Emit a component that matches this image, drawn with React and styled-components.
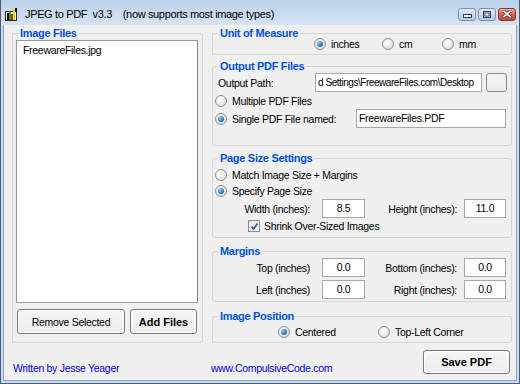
import React from 'react';
import styled, { createGlobalStyle } from 'styled-components';

const GlobalStyle = createGlobalStyle`
    html, body {
        margin: 0;
        padding: 0;
        background: #ffffff;
    }
    body {
        font-family: "Liberation Sans", Arial, sans-serif;
        font-size: 11px;
        color: #000;
    }
`;

const Window = styled.div`
    width: 520px;
    height: 384px;
    box-sizing: border-box;
    border: 1px solid #4a5d78;
    border-top: none;
    background: #c8daf0;
    display: flex;
    flex-direction: column;
    overflow: hidden;
`;

const TitleBar = styled.div`
    height: 25px;
    flex: none;
    display: flex;
    align-items: center;
    padding: 3px 3px 0 4px;
    box-sizing: border-box;
    background: linear-gradient(#bcd1ea, #d6e3f3);
`;

const TitleText = styled.span`
    flex: 1;
    margin-left: 7px;
    white-space: pre;
    font-size: 11px;
    letter-spacing: -0.35px;
    color: #000;
`;

const CaptionButtons = styled.div`
    display: flex;
    gap: 2px;
`;

const CaptionButton = styled.div`
    width: 18px;
    height: 13px;
    box-sizing: border-box;
    border: 1px solid ${p => (p.$close ? '#8d3c30' : '#7a90ae')};
    border-radius: 3px;
    background: ${p =>
        p.$close
            ? 'linear-gradient(#e9a89a, #cf5f4c 55%, #c04a36)'
            : 'linear-gradient(#e4ecf7, #c6d6ea 55%, #b9cce4)'};
    display: flex;
    align-items: center;
    justify-content: center;
`;

const Frame = styled.div`
    flex: 1;
    padding: 0 2px 2px;
    display: flex;
`;

const Client = styled.div`
    flex: 1;
    background: #f0f0f0;
    border: 1px solid #8aa2c0;
    border-top: none;
    display: flex;
    flex-direction: column;
`;

const Main = styled.div`
    display: grid;
    grid-template-columns: 191px 300px;
    column-gap: 9px;
    padding: 8px 0 0 8px;
`;

const Group = styled.div`
    position: relative;
    box-sizing: border-box;
    height: ${p => p.$h}px;
    margin-top: ${p => p.$mt || 0}px;
    border: 1px solid #d5d5d5;
    border-radius: 3px;
    padding: ${p => p.$pad || '0'};
    display: flex;
    flex-direction: column;
`;

const Legend = styled.span`
    position: absolute;
    top: -7px;
    left: 5px;
    padding: 0 2px;
    background: #f0f0f0;
    color: #0050dd;
    font-weight: bold;
    font-size: 11px;
    line-height: 13px;
    letter-spacing: -0.3px;
`;

const RightColumn = styled.div`
    display: flex;
    flex-direction: column;
`;

const ListBox = styled.div`
    height: 263px;
    width: 182px;
    box-sizing: border-box;
    background: #fff;
    border: 1px solid #9a9a9a;
    border-right-color: #828282;
    padding: 3px 6px;
    font-size: 10.5px;
    letter-spacing: -0.3px;
`;

const ButtonRow = styled.div`
    display: flex;
    gap: 5px;
    margin: 6px 0 0 1px;
`;

const Button = styled.button`
    width: ${p => p.$w}px;
    height: ${p => p.$h || 25}px;
    box-sizing: border-box;
    border: 1px solid #7a7a7a;
    border-radius: 3px;
    background: linear-gradient(#f6f6f6, #ececec);
    box-shadow: inset 0 0 0 1px #fbfbfb;
    font-family: "Liberation Sans", Arial, sans-serif;
    font-size: ${p => (p.$bold ? 11 : 10.5)}px;
    font-weight: ${p => (p.$bold ? 'bold' : 'normal')};
    letter-spacing: ${p => (p.$bold ? '0' : '-0.3px')};
    color: #000;
    padding: 0;
`;

const Row = styled.div`
    display: ${p => (p.$grid ? 'grid' : 'flex')};
    grid-template-columns: ${p => p.$cols || 'none'};
    align-items: center;
    height: ${p => p.$h}px;
    margin-top: ${p => p.$mt || 0}px;
    padding-left: ${p => p.$pl || 0}px;
    flex: none;
`;

const Label = styled.span`
    font-size: 10.5px;
    letter-spacing: -0.3px;
    white-space: nowrap;
    text-align: ${p => (p.$right ? 'right' : 'left')};
    padding-right: ${p => p.$pr || 0}px;
    padding-left: ${p => p.$pl || 0}px;
`;

const TextBox = styled.div`
    box-sizing: border-box;
    height: 19px;
    background: #fff;
    border: 1px solid #a8a8a8;
    font-size: ${p => (p.$small ? 10 : 10.5)}px;
    letter-spacing: ${p => (p.$small ? '-0.45px' : '-0.3px')};
    line-height: 17px;
    padding: 0 2px;
    white-space: nowrap;
    overflow: hidden;
    text-align: ${p => (p.$center ? 'center' : 'left')};
`;

const BrowseButton = styled.div`
    box-sizing: border-box;
    width: 21px;
    height: 19px;
    margin-left: 4px;
    border: 1px solid #8a8a8a;
    border-radius: 3px;
    background: linear-gradient(#f6f6f6, #ececec);
`;

const Option = styled.label`
    display: flex;
    align-items: center;
    width: ${p => (p.$w ? `${p.$w}px` : 'auto')};
    flex: none;
`;

const RadioDot = styled.span`
    position: relative;
    width: 12px;
    height: 12px;
    box-sizing: border-box;
    flex: none;
    border-radius: 50%;
    border: 1px solid #8e8f8f;
    background: radial-gradient(circle at 40% 40%, #ffffff, #dedede 80%);
    margin-right: 5px;
    &::after {
        content: '';
        display: ${p => (p.$on ? 'block' : 'none')};
        position: absolute;
        left: 2px;
        top: 2px;
        width: 6px;
        height: 6px;
        border-radius: 50%;
        background: radial-gradient(circle at 35% 35%, #8fd3f7, #1f62ad 70%, #174b86);
    }
`;

const CheckBox = styled.span`
    width: 12px;
    height: 12px;
    box-sizing: border-box;
    border: 1px solid #8e8f8f;
    background: linear-gradient(135deg, #e0e0e0, #ffffff);
    margin-right: 4px;
    display: flex;
    align-items: center;
    justify-content: center;
`;

const Footer = styled.div`
    display: flex;
    align-items: flex-start;
    padding: 7px 6px 0 9px;
`;

const FooterLink = styled.span`
    color: #0000e8;
    font-size: 10.5px;
    letter-spacing: -0.3px;
    line-height: 13px;
    margin-top: 12px;
    width: ${p => p.$w}px;
    flex: none;
`;

const Spacer = styled.div`
    flex: 1;
`;

const AppIcon = () => (
    <svg width="13" height="13" viewBox="0 0 13 13">
        <rect x="0.5" y="3.5" width="11" height="9" fill="#fff" stroke="#222" />
        <rect x="2" y="5" width="2" height="7" fill="#111" />
        <rect x="4" y="3" width="2" height="9" fill="#1fa02a" />
        <rect x="6" y="6" width="2" height="6" fill="#e11d1d" />
        <rect x="8" y="1" width="2" height="11" fill="#e7d400" />
        <rect x="10" y="0" width="2" height="4" fill="#111" />
    </svg>
);

const Radio = ({ on, label, w }) => (
    <Option $w={w}>
        <RadioDot $on={on} />
        <Label>{label}</Label>
    </Option>
);

const App = () => {
    return (
        <>
            <GlobalStyle />
            <Window>
                <TitleBar>
                    <AppIcon />
                    <TitleText>{'JPEG to PDF  v3.3    (now supports most image types)'}</TitleText>
                    <CaptionButtons>
                        <CaptionButton>
                            <svg width="9" height="8" viewBox="0 0 9 8">
                                <rect x="0.5" y="4.5" width="8" height="3" fill="#fff" stroke="#2c3e5c" />
                            </svg>
                        </CaptionButton>
                        <CaptionButton>
                            <svg width="8" height="7" viewBox="0 0 8 7">
                                <rect x="0.5" y="0.5" width="7" height="6" fill="none" stroke="#2c3e5c" />
                                <rect x="2" y="2" width="4" height="3" fill="#fff" stroke="#2c3e5c" strokeWidth="0.8" />
                            </svg>
                        </CaptionButton>
                        <CaptionButton $close>
                            <svg width="10" height="8" viewBox="0 0 10 8">
                                <path d="M1.5 1 L8.5 7 M8.5 1 L1.5 7" stroke="#3b1010" strokeWidth="3" />
                                <path d="M1.5 1 L8.5 7 M8.5 1 L1.5 7" stroke="#fff" strokeWidth="1.8" />
                            </svg>
                        </CaptionButton>
                    </CaptionButtons>
                </TitleBar>
                <Frame>
                    <Client>
                        <Main>
                            <Group $h={310} $pad="6px 0 0 3px">
                                <Legend>Image Files</Legend>
                                <ListBox>FreewareFiles.jpg</ListBox>
                                <ButtonRow>
                                    <Button $w={108}>Remove Selected</Button>
                                    <Button $w={67} $bold>Add Files</Button>
                                </ButtonRow>
                            </Group>
                            <RightColumn>
                                <Group $h={22}>
                                    <Legend>Unit of Measure</Legend>
                                    <Row $h={20} $pl={101}>
                                        <Radio on label="inches" w={68} />
                                        <Radio label="cm" w={60} />
                                        <Radio label="mm" />
                                    </Row>
                                </Group>
                                <Group $h={80} $mt={11} $pad="6px 0 0 0">
                                    <Legend>Output PDF Files</Legend>
                                    <Row $h={19} $grid $cols="102px 167px 25px">
                                        <Label $pl={5}>Output Path:</Label>
                                        <TextBox $small>d Settings\FreewareFiles.com\Desktop</TextBox>
                                        <BrowseButton />
                                    </Row>
                                    <Row $h={17} $pl={2}>
                                        <Radio label="Multiple PDF Files" />
                                    </Row>
                                    <Row $h={19} $pl={2} $grid $cols="141px 150px">
                                        <Radio on label="Single PDF File named:" />
                                        <TextBox>FreewareFiles.PDF</TextBox>
                                    </Row>
                                </Group>
                                <Group $h={80} $mt={12} $pad="8px 0 0 0">
                                    <Legend>Page Size Settings</Legend>
                                    <Row $h={16} $pl={2}>
                                        <Radio label="Match Image Size + Margins" />
                                    </Row>
                                    <Row $h={16} $pl={2}>
                                        <Radio on label="Specify Page Size" />
                                    </Row>
                                    <Row $h={19} $grid $cols="109px 43px 99px 42px">
                                        <Label $right $pr={12}>Width (inches):</Label>
                                        <TextBox $center>8.5</TextBox>
                                        <Label $right $pr={7}>Height (inches):</Label>
                                        <TextBox $center>11.0</TextBox>
                                    </Row>
                                    <Row $h={16} $pl={35}>
                                        <CheckBox>
                                            <svg width="9" height="9" viewBox="0 0 9 9">
                                                <path d="M1.5 4.5 L3.5 7 L7.5 1.5" fill="none" stroke="#3c5a96" strokeWidth="1.8" />
                                            </svg>
                                        </CheckBox>
                                        <Label>Shrink Over-Sized Images</Label>
                                    </Row>
                                </Group>
                                <Group $h={51} $mt={13} $pad="6px 0 0 0">
                                    <Legend>Margins</Legend>
                                    <Row $h={19} $grid $cols="109px 43px 99px 42px">
                                        <Label $right $pr={12}>Top (inches)</Label>
                                        <TextBox $center>0.0</TextBox>
                                        <Label $right $pr={7}>Bottom (inches):</Label>
                                        <TextBox $center>0.0</TextBox>
                                    </Row>
                                    <Row $h={19} $mt={3} $grid $cols="109px 43px 99px 42px">
                                        <Label $right $pr={12}>Left (inches)</Label>
                                        <TextBox $center>0.0</TextBox>
                                        <Label $right $pr={7}>Right (inches):</Label>
                                        <TextBox $center>0.0</TextBox>
                                    </Row>
                                </Group>
                                <Group $h={27} $mt={14} $pad="7px 0 0 0">
                                    <Legend>Image Position</Legend>
                                    <Row $h={15} $pl={65}>
                                        <Radio on label="Centered" w={100} />
                                        <Radio label="Top-Left Corner" />
                                    </Row>
                                </Group>
                            </RightColumn>
                        </Main>
                        <Footer>
                            <FooterLink $w={198}>Written by Jesse Yeager</FooterLink>
                            <FooterLink $w={150}>www.CompulsiveCode.com</FooterLink>
                            <Spacer />
                            <Button $w={87} $h={24} $bold>Save PDF</Button>
                        </Footer>
                    </Client>
                </Frame>
            </Window>
        </>
    );
};

export default App;
